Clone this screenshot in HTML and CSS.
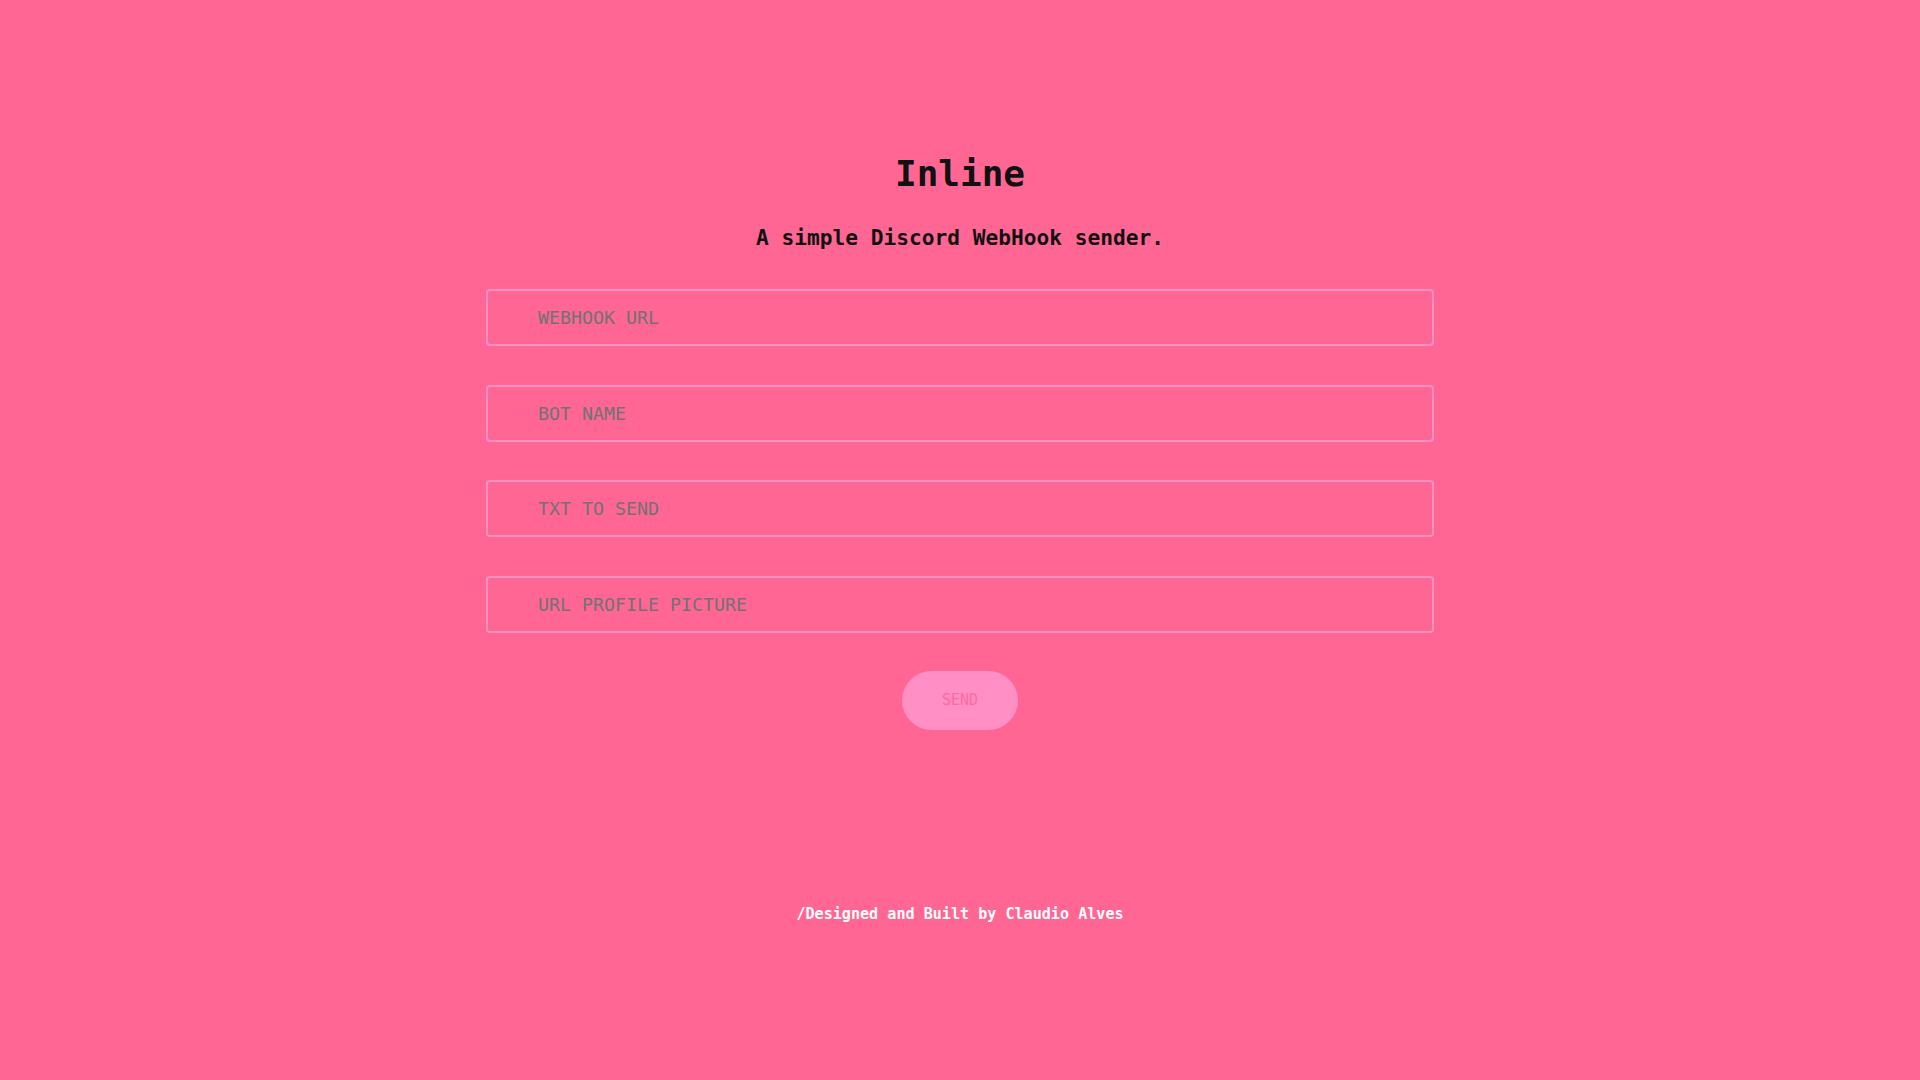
FILE: index.html
```html
<!DOCTYPE html>
<html lang="en">
<head>
<meta charset="utf-8">
<title>Inline</title>
<link rel="stylesheet" href="styles.css">
</head>
<body>
<main class="page">
  <h1 class="title">Inline</h1>
  <h3 class="subtitle">A simple Discord WebHook sender.</h3>
  <form class="form">
    <input class="field" type="text" placeholder="WEBHOOK URL">
    <input class="field" type="text" placeholder="BOT NAME">
    <input class="field" type="text" placeholder="TXT TO SEND">
    <input class="field" type="text" placeholder="URL PROFILE PICTURE">
    <button class="send" type="button">SEND</button>
  </form>
  <footer class="footer">/Designed and Built by Claudio Alves</footer>
</main>
</body>
</html>
```
FILE: styles.css
```css
html, body {
  margin: 0;
  padding: 0;
  background: #ff6694;
  height: 100%;
}
body {
  font-family: "DejaVu Sans Mono", "Liberation Mono", monospace;
  color: #111;
}
.page {
  display: flex;
  flex-direction: column;
  align-items: center;
  padding-top: 152px;
}
.title {
  margin: 0;
  font-size: 36px;
  line-height: 44px;
  font-weight: bold;
}
.subtitle {
  margin: 28px 0 0;
  font-size: 21.2px;
  line-height: 28px;
  font-weight: bold;
}
.form {
  margin-top: 37px;
  width: 948px;
  display: flex;
  flex-direction: column;
  align-items: center;
  gap: 38.7px;
}
.field {
  box-sizing: border-box;
  width: 100%;
  height: 57px;
  border: 2px solid #ff92c2;
  border-radius: 4px;
  background: transparent;
  padding: 0 20px 0 50px;
  font-family: "DejaVu Sans Mono", "Liberation Mono", monospace;
  font-size: 18.3px;
  color: #222;
  outline: none;
}
.field::placeholder {
  color: #707373;
  opacity: 1;
}
.send {
  margin-top: -1px;
  width: 116px;
  height: 59px;
  border: none;
  border-radius: 30px;
  background: #ff8fc4;
  color: #ff6a9e;
  font-family: "DejaVu Sans Mono", "Liberation Mono", monospace;
  font-size: 15px;
  cursor: pointer;
}
.footer {
  margin-top: 174px;
  font-size: 15.1px;
  line-height: 20px;
  font-weight: bold;
  color: #fff;
}
```
